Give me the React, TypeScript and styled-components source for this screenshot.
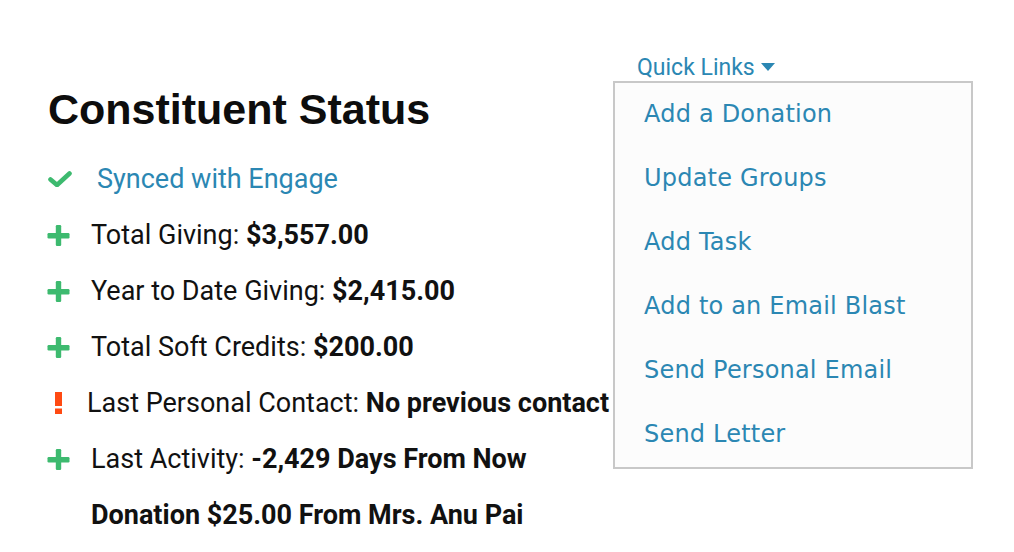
import React from 'react';
import styled, { createGlobalStyle } from 'styled-components';

const GlobalStyle = createGlobalStyle`
  html, body {
    margin: 0;
    padding: 0;
    background: #ffffff;
  }
  body {
    font-family: Roboto, "Liberation Sans", sans-serif;
    color: #111111;
  }
`;

type StatusItem = {
  icon: 'check' | 'plus' | 'alert' | 'none';
  label?: string;
  value?: string;
  link?: string;
};

const statusItems: StatusItem[] = [
  { icon: 'check', link: 'Synced with Engage' },
  { icon: 'plus', label: 'Total Giving:', value: '$3,557.00' },
  { icon: 'plus', label: 'Year to Date Giving:', value: '$2,415.00' },
  { icon: 'plus', label: 'Total Soft Credits:', value: '$200.00' },
  { icon: 'alert', label: 'Last Personal Contact:', value: 'No previous contact' },
  { icon: 'plus', label: 'Last Activity:', value: '-2,429 Days From Now' },
  { icon: 'none', value: 'Donation $25.00 From Mrs. Anu Pai' },
];

const quickLinks = [
  'Add a Donation',
  'Update Groups',
  'Add Task',
  'Add to an Email Blast',
  'Send Personal Email',
  'Send Letter',
];

const iconSlots = {
  check: { lead: 48, width: 24, gap: 25 },
  plus: { lead: 47, width: 23, gap: 21 },
  alert: { lead: 55, width: 7, gap: 25 },
  none: { lead: 47, width: 23, gap: 21 },
};

const StatusIcon = ({ kind }: { kind: StatusItem['icon'] }) => {
  if (kind === 'check') {
    return (
      <svg width="24" height="16" viewBox="0 0 24 16">
        <path d="M2.5 8.5 L9 14 L21.5 2.5" fill="none" stroke="#3dba6f" strokeWidth="4.6" strokeLinecap="round" strokeLinejoin="round" />
      </svg>
    );
  }
  if (kind === 'plus') {
    return (
      <svg width="23" height="21" viewBox="0 0 23 21">
        <rect x="0.5" y="8" width="22" height="5.4" rx="1.2" fill="#3dba6f" />
        <rect x="8.8" y="0" width="5.4" height="21" rx="1.2" fill="#3dba6f" />
      </svg>
    );
  }
  if (kind === 'alert') {
    return (
      <svg width="7" height="22" viewBox="0 0 7 22">
        <rect x="0" y="0" width="7" height="14" fill="#ff4a12" />
        <rect x="0" y="16.5" width="7" height="5.5" fill="#ff4a12" />
      </svg>
    );
  }
  return null;
};

const App = () => {
  return (
    <>
      <GlobalStyle />
      <Page>
        <StatusPanel>
          <Heading>Constituent Status</Heading>
          <StatusList>
            {statusItems.map((item, i) => {
              const slot = iconSlots[item.icon];
              return (
                <StatusRow key={i}>
                  <IconSlot $lead={slot.lead} $width={slot.width} $gap={slot.gap}>
                    <StatusIcon kind={item.icon} />
                  </IconSlot>
                  {item.link ? (
                    <SyncLink>{item.link}</SyncLink>
                  ) : (
                    <RowText>
                      {item.label && <>{item.label} </>}
                      <Value>{item.value}</Value>
                    </RowText>
                  )}
                </StatusRow>
              );
            })}
          </StatusList>
        </StatusPanel>
        <QuickLinksColumn>
          <Dropdown>
            <Trigger>
              Quick Links
              <Caret viewBox="0 0 14 8" width="14" height="8">
                <path d="M0 0 H14 L7 8 Z" fill="#2b87b3" />
              </Caret>
            </Trigger>
            <Menu>
              {quickLinks.map((link) => (
                <MenuItem key={link}>{link}</MenuItem>
              ))}
            </Menu>
          </Dropdown>
        </QuickLinksColumn>
      </Page>
    </>
  );
};

export default App;

const Page = styled.main`
  display: grid;
  grid-template-columns: 637px 1fr;
  width: 1014px;
  height: 552px;
  overflow: hidden;
`;

const StatusPanel = styled.section`
  display: flex;
  flex-direction: column;
  padding-top: 88px;
`;

const Heading = styled.h1`
  margin: 0 0 20px 48px;
  font-family: "Liberation Sans", Arial, sans-serif;
  font-weight: 700;
  font-size: 43px;
  line-height: 1;
  color: #0d0d0d;
  letter-spacing: 0;
`;

const StatusList = styled.ul`
  list-style: none;
  margin: 0;
  padding: 0;
`;

const StatusRow = styled.li`
  display: flex;
  align-items: center;
  height: 56px;
  white-space: nowrap;
`;

const IconSlot = styled.span<{ $lead: number; $width: number; $gap: number }>`
  display: inline-flex;
  align-items: center;
  justify-content: center;
  flex: none;
  margin-left: ${(p) => p.$lead}px;
  margin-right: ${(p) => p.$gap}px;
  width: ${(p) => p.$width}px;
`;

const RowText = styled.span`
  font-family: Roboto, "Liberation Sans", sans-serif;
  font-size: 27px;
  color: #111111;
`;

const Value = styled.strong`
  font-weight: 700;
`;

const SyncLink = styled.a`
  font-family: Roboto, "Liberation Sans", sans-serif;
  font-size: 27px;
  color: #2b87b3;
  text-decoration: none;
  cursor: pointer;
`;

const QuickLinksColumn = styled.aside`
  padding-top: 54px;
`;

const Dropdown = styled.div`
  position: relative;
  display: inline-block;
`;

const Trigger = styled.button`
  display: inline-flex;
  align-items: center;
  gap: 6px;
  height: 27px;
  padding: 0;
  border: none;
  background: none;
  font-family: Roboto, "Liberation Sans", sans-serif;
  font-size: 23px;
  line-height: 27px;
  color: #2b87b3;
  cursor: pointer;
`;

const Caret = styled.svg`
  margin-top: -2px;
`;

const Menu = styled.ul`
  position: absolute;
  top: 100%;
  left: -24px;
  width: 356px;
  margin: 0;
  padding: 0;
  list-style: none;
  background: #fcfcfc;
  border: 2px solid #c8c8c8;
`;

const MenuItem = styled.li`
  display: flex;
  align-items: center;
  height: 64px;
  box-sizing: border-box;
  padding: 0 0 3px 29px;
  font-family: "DejaVu Sans", Verdana, sans-serif;
  font-size: 24px;
  letter-spacing: 0.2px;
  color: #2b87b3;
  cursor: pointer;
  white-space: nowrap;
`;
